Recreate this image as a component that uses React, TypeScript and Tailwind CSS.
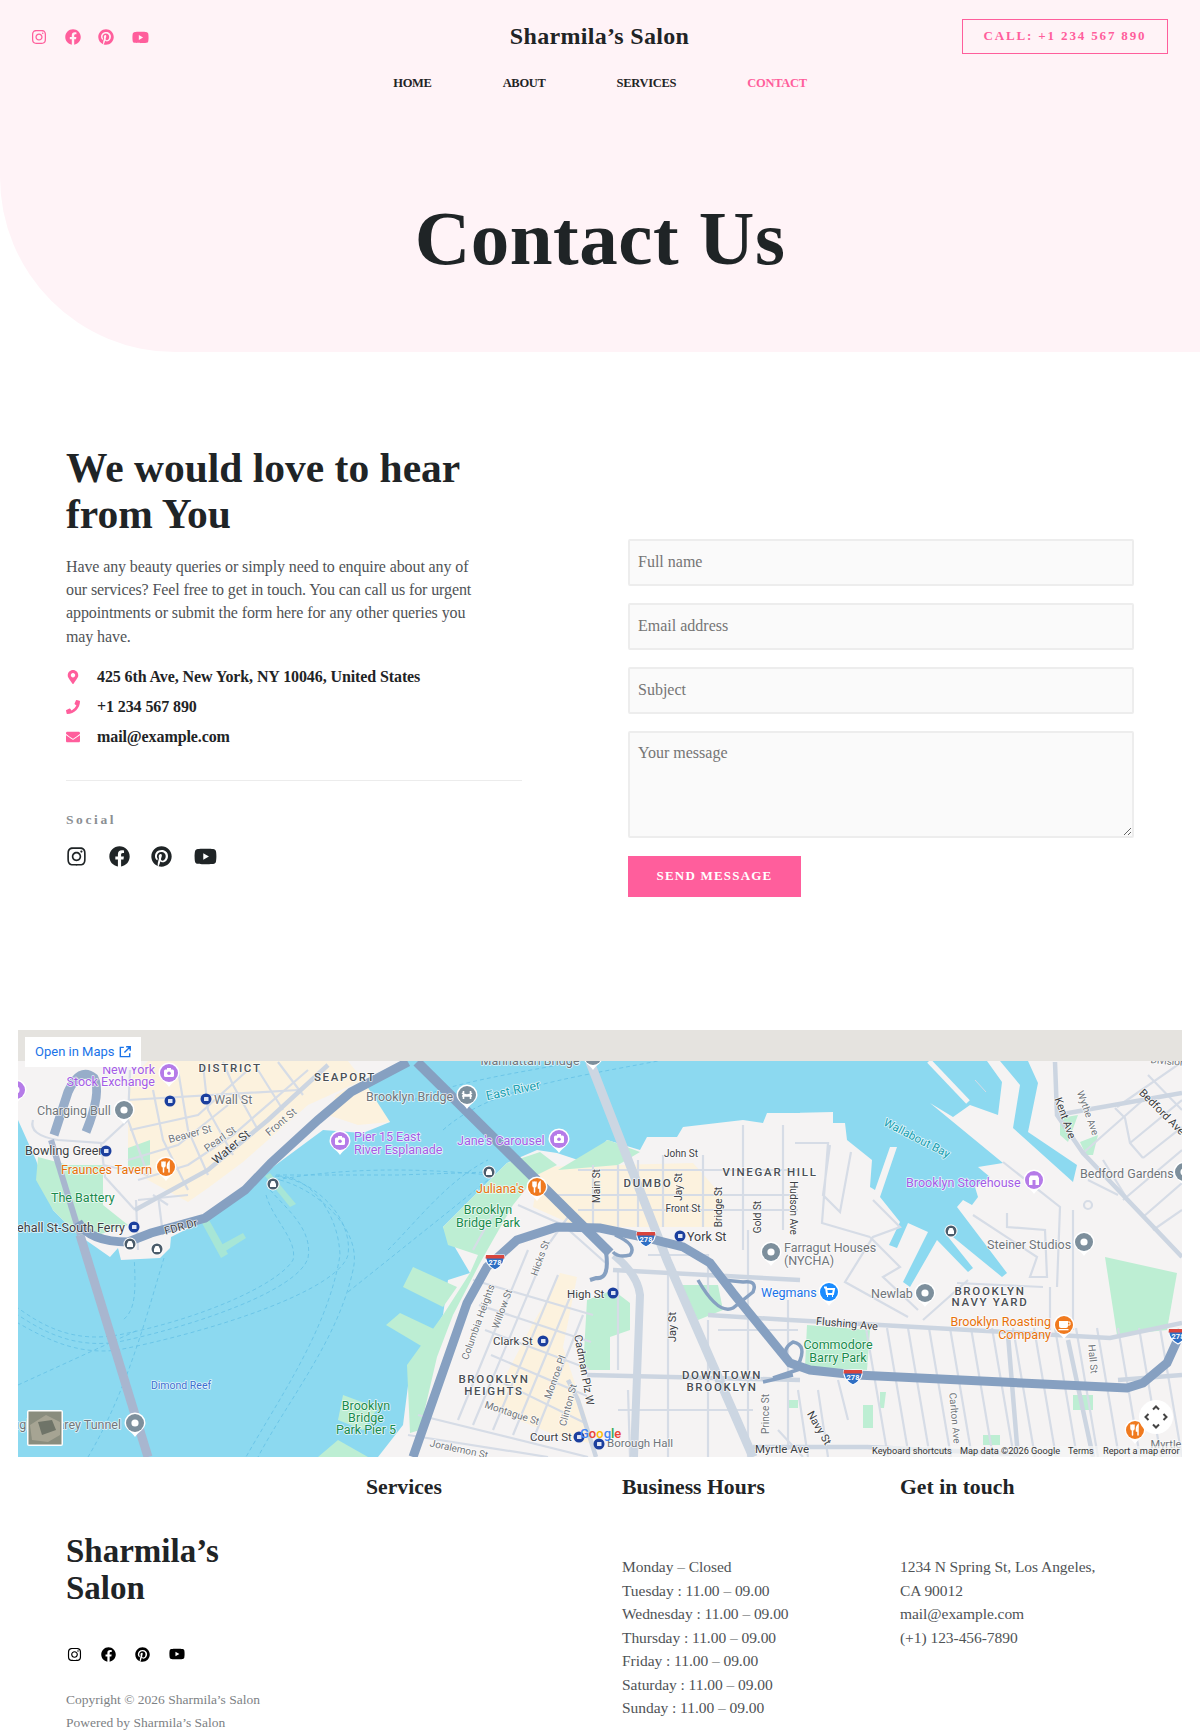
import type { ReactNode } from 'react';
import { FaEnvelope, FaFacebook, FaInstagram, FaMapMarkerAlt, FaPhoneAlt, FaPinterest, FaYoutube } from 'react-icons/fa';

const WATER = '#8cd9f0';
const LAND = '#f5f3f3';
const PARK = '#bdeed3';
const CREAM = '#fcf2de';
const ROAD = '#d6dce6';
const HIGHWAY = '#86a0c1';

type Label = [string, number, number, string, number?, string?, number?];

const GREY = '#70757a';
const DARK = '#3c4043';
const PURPLE = '#a45ce6';
const ORANGE = '#e8710a';
const GREEN = '#188a4c';
const BLUE = '#1a73e8';
const TEAL = '#129eaf';

// text, x, y, colour, rotation, anchor, size
const labels: Label[] = [
  ['New York', 137, 39, PURPLE, 0, 'end'],
  ['Stock Exchange', 137, 51, PURPLE, 0, 'end'],
  ['Wall St', 196, 69, GREY, 0, 'start'],
  ['Charging Bull', 19, 80, GREY, 0, 'start'],
  ['Beaver St', 172, 104, GREY, -15, 'middle', 10.5],
  ['Pearl St', 202, 109, GREY, -35, 'middle', 10.5],
  ['Water St', 213, 117, DARK, -40, 'middle', 12],
  ['Front St', 263, 92, GREY, -40, 'middle', 10.5],
  ['Bowling Green', 7, 120, DARK, 0, 'start'],
  ['Fraunces Tavern', 43, 139, ORANGE, 0, 'start'],
  ['The Battery', 33, 167, GREEN, 0, 'start'],
  ['Whitehall St-South Ferry', 107, 197, DARK, 0, 'end'],
  ['FDR Dr', 163, 197, DARK, -15, 'middle', 11],
  ['Pier 15 East', 336, 106, PURPLE, 0, 'start'],
  ['River Esplanade', 336, 119, PURPLE, 0, 'start'],
  ['Brooklyn Bridge', 348, 66, GREY, 0, 'start'],
  ['East River', 495, 60, TEAL, -12, 'middle'],
  ["Jane's Carousel", 439, 110, PURPLE, 0, 'start'],
  ["Juliana's", 458, 158, ORANGE, 0, 'start'],
  ['Brooklyn', 470, 179, GREEN, 0, 'middle'],
  ['Bridge Park', 470, 192, GREEN, 0, 'middle'],
  ['Main St', 578, 156, DARK, -90, 'middle', 10],
  ['Jay St', 660, 157, DARK, -90, 'middle', 10],
  ['Front St', 665, 178, DARK, 0, 'middle', 10],
  ['John St', 663, 123, DARK, 0, 'middle', 10],
  ['Bridge St', 700, 177, DARK, -90, 'middle', 10],
  ['Gold St', 739, 187, DARK, -90, 'middle', 10],
  ['Hudson Ave', 775, 178, DARK, 90, 'middle', 10],
  ['York St', 669, 206, DARK, 0, 'start'],
  ['Farragut Houses', 766, 217, GREY, 0, 'start'],
  ['(NYCHA)', 766, 230, GREY, 0, 'start'],
  ['Wegmans', 743, 262, BLUE, 0, 'start'],
  ['Newlab', 853, 263, GREY, 0, 'start'],
  ['Steiner Studios', 969, 214, GREY, 0, 'start'],
  ['Brooklyn Storehouse', 888, 152, PURPLE, 0, 'start'],
  ['Wallabout Bay', 899, 108, TEAL, 27, 'middle', 11.5],
  ['Bedford Gardens', 1062, 143, GREY, 0, 'start'],
  ['Kent Ave', 1047, 88, DARK, 70, 'middle', 11],
  ['Wythe Ave', 1070, 83, GREY, 70, 'middle', 10],
  ['Bedford Ave', 1144, 82, DARK, 45, 'middle', 11],
  ['Division', 1150, 31, GREY, 5, 'middle', 10],
  ['Brooklyn Roasting', 1033, 291, ORANGE, 0, 'end'],
  ['Company', 1033, 304, ORANGE, 0, 'end'],
  ['Flushing Ave', 829, 294, DARK, 5, 'middle', 11],
  ['Commodore', 820, 314, GREEN, 0, 'middle'],
  ['Barry Park', 820, 327, GREEN, 0, 'middle'],
  ['Hall St', 1075, 329, GREY, 85, 'middle', 10],
  ['Carlton Ave', 937, 388, GREY, 85, 'middle', 10],
  ['Navy St', 801, 398, DARK, 60, 'middle', 11],
  ['Myrtle Ave', 737, 419, DARK, 0, 'start', 11.5],
  ['Prince St', 747, 384, GREY, -90, 'middle', 10],
  ['Jay St', 654, 297, DARK, -90, 'middle', 11],
  ['High St', 549, 264, DARK, 0, 'start', 11.5],
  ['Clark St', 475, 311, DARK, 0, 'start', 11.5],
  ['Columbia Heights', 460, 292, GREY, -70, 'middle', 10],
  ['Willow St', 484, 279, GREY, -70, 'middle', 10],
  ['Hicks St', 522, 228, GREY, -70, 'middle', 10],
  ['Monroe Pl', 537, 347, GREY, -70, 'middle', 10],
  ['Clinton St', 550, 375, GREY, -75, 'middle', 10],
  ['Cadman Plz W', 566, 340, DARK, 80, 'middle', 11],
  ['Montague St', 494, 383, GREY, 18, 'middle', 10],
  ['Joralemon St', 441, 419, GREY, 12, 'middle', 10],
  ['Court St', 512, 407, DARK, 0, 'start', 11.5],
  ['Borough Hall', 589, 413, GREY, 0, 'start', 11.5],
  ['Dimond Reef', 163, 355, '#3c6fd0', 0, 'middle', 10.5],
  ['Brooklyn', 348, 375, GREEN, 0, 'middle'],
  ['Bridge', 348, 387, GREEN, 0, 'middle'],
  ['Park Pier 5', 348, 399, GREEN, 0, 'middle'],
  ['Hugh L. Carey Tunnel', 103, 394, GREY, 0, 'end'],
  ['Manhattan Bridge', 512, 30, GREY, 0, 'middle'],
  ['Myrtle', 1148, 414, GREY, 0, 'middle', 11],
];

const districts: [string, number, number][] = [
  ['DISTRICT', 212, 38],
  ['SEAPORT', 327, 47],
  ['DUMBO', 630, 153],
  ['VINEGAR HILL', 752, 142],
  ['BROOKLYN', 476, 349],
  ['HEIGHTS', 476, 361],
  ['DOWNTOWN', 704, 345],
  ['BROOKLYN', 704, 357],
  ['BROOKLYN', 972, 261],
  ['NAVY YARD', 972, 272],
];

const pins: [number, number, string, string][] = [
  [151, 43, '#b57be8', 'cam'],
  [106, 80, '#7d8f9c', 'dot'],
  [148, 137, '#f07a1f', 'fork'],
  [322, 111, '#b57be8', 'cam'],
  [449, 65, '#7d8f9c', 'bridge'],
  [541, 109, '#b57be8', 'cam'],
  [519, 157, '#f07a1f', 'fork'],
  [753, 222, '#7d8f9c', 'dot'],
  [811, 262, '#1a8cff', 'cart'],
  [907, 263, '#7d8f9c', 'dot'],
  [1066, 212, '#7d8f9c', 'dot'],
  [1016, 150, '#b57be8', 'store'],
  [1046, 295, '#f07a1f', 'cup'],
  [117, 393, '#7d8f9c', 'dot'],
  [1117, 400, '#f07a1f', 'fork'],
  [1166, 142, '#7d8f9c', 'dot'],
  [575, 26, '#7d8f9c', 'dot'],
  [-2, 60, '#b57be8', 'dot'],
];

const subways: [number, number][] = [
  [188, 69], [152, 71], [88, 121], [116, 197], [662, 206], [595, 263], [525, 311], [561, 407], [581, 414],
];
const ferries: [number, number][] = [[112, 214], [139, 219], [255, 154], [471, 142], [933, 201]];
const shields: [number, number][] = [[477, 232], [628, 209], [835, 347], [1160, 306]];

function Pin({ x, y, color, kind }: { x: number; y: number; color: string; kind: string }) {
  return (
    <g transform={`translate(${x} ${y})`}>
      <path d="M-10.5,0 A10.5,10.5 0 1 1 10.5,0 C10.5,6 3,9 0,14 C-3,9 -10.5,6 -10.5,0 Z" fill="#fff" />
      <circle r="9" fill={color} />
      {kind === 'dot' && <circle r="3.6" fill="#fff" />}
      {kind === 'cam' && (
        <g fill="#fff">
          <rect x="-5" y="-3.5" width="10" height="7.5" rx="1.5" />
          <rect x="-2" y="-5" width="4" height="2" />
          <circle r="1.8" cy="0.3" fill={color} />
        </g>
      )}
      {kind === 'fork' && (
        <g fill="none" stroke="#fff" strokeWidth="1.5" strokeLinecap="round">
          <path d="M-4,-5 V-1.5 Q-4,0 -2.5,0 Q-1,0 -1,-1.5 V-5 M-2.5,-5 V5" />
          <path d="M3,5 V-5 Q1,-3 1.5,1 H3" />
        </g>
      )}
      {kind === 'cart' && (
        <path d="M-5,-4.5 H-3 L-2,2 H4 L5,-3 H-2.5 M-2,4 h1 M3,4 h1" fill="none" stroke="#fff" strokeWidth="2" />
      )}
      {kind === 'store' && (
        <g fill="#fff">
          <path d="M-5,-2 L-3.5,-4.5 H3.5 L5,-2 V5 H-5 Z" />
          <rect x="-1.5" y="0" width="3" height="5" fill={color} />
        </g>
      )}
      {kind === 'cup' && (
        <g fill="#fff">
          <path d="M-5,-4 H4 V1 Q4,3 2,3 H-3 Q-5,3 -5,1 Z" />
          <rect x="-5.5" y="4" width="10" height="1.3" />
          <path d="M4,-3 H6 V0 H4" fill="none" stroke="#fff" strokeWidth="1" />
        </g>
      )}
      {kind === 'bridge' && (
        <path d="M-5,1 H5 M-3.5,-4 V4 M3.5,-4 V4 M-5,-2 Q0,2 5,-2" fill="none" stroke="#fff" strokeWidth="1.6" />
      )}
    </g>
  );
}

function FullscreenGlyph() {
  return (
    <g fill="none" stroke="#444" strokeWidth="2">
      <path d="M-3,-7.5 L0,-10.5 L3,-7.5" />
      <path d="M-3,7.5 L0,10.5 L3,7.5" />
      <path d="M-7.5,-3 L-10.5,0 L-7.5,3" />
      <path d="M7.5,-3 L10.5,0 L7.5,3" />
    </g>
  );
}

function MapPicture() {
  const eastGrid = Array.from({ length: 15 }, (_, i) => 848 + i * 21);
  const heightsA = [0, 1, 2, 3, 4];
  return (
    <svg viewBox="0 0 1164 427" className="block h-[427px] w-[1164px] font-['Roboto',sans-serif]">
      <rect width="1164" height="427" fill={WATER} />

      {/* ferry routes */}
      <g fill="none" stroke="#68c3e6" strokeWidth="0.9" strokeDasharray="4 3">
        <path d="M257,146 C300,150 335,190 330,225 C320,260 200,300 100,320 C60,325 30,310 0,293" />
        <path d="M252,160 C270,180 295,200 290,228 C280,260 180,295 100,312 C60,318 30,305 0,285" />
        <path d="M248,165 C255,190 280,210 275,230 C260,255 180,290 100,305 C60,312 30,300 0,278" />
        <path d="M260,146 C290,146 320,180 322,225 C310,300 260,370 228,427" />
        <path d="M262,150 C300,160 345,200 335,240 C320,310 270,370 240,427" />
        <path d="M258,145 H380 L471,142" />
        <path d="M258,150 C340,135 420,140 471,145" />
        <path d="M330,262 L470,150" />
        <path d="M116,225 C118,260 118,280 105,290 M146,228 C130,280 110,360 70,427" />
        <path d="M0,355 L120,300" />
        <path d="M425,100 C470,60 540,50 640,31" />
        <path d="M395,70 C440,50 520,40 560,31" />
        <path d="M370,220 C400,190 430,150 470,130" />
      </g>

      {/* land */}
      <polygon
        fill={LAND}
        points="0,31 390,31 335,62 355,78 372,92 345,103 305,100 255,137 227,163 187,190 153,207 152,218 142,228 103,230 100,218 92,227 72,213 60,205 35,180 18,130 0,90"
      />
      <polygon
        fill={LAND}
        points="360,427 385,395 392,340 425,285 430,250 452,243 425,197 459,163 489,133 519,120 539,123 569,133 589,110 622,120 629,107 659,107 665,97 725,90 745,93 749,83 782,83 782,31 1164,31 1164,427"
      />
      <polygon
        fill={WATER}
        points="772,31 910,31 969,31 984,52 980,85 952,75 935,87 912,73 985,133 960,137 972,147 957,157 960,167 954,175 945,170 939,177 989,243 984,247 935,207 927,203 955,238 950,242 919,210 892,257 885,252 910,202 890,193 879,218 871,215 882,192 862,167 879,117 872,117 857,160 852,157 854,130 829,110 827,93 815,93 815,82 772,83"
      />
      <polygon fill={WATER} points="982,31 1010,31 1020,53 1010,102 1059,135 1055,152 995,98 1002,55" />
      <path d="M911,31 L950,72" stroke={LAND} strokeWidth="5" />
      <path d="M957,50 L968,62" stroke={ROAD} strokeWidth="1" />

      {/* parks and neighbourhood tint */}
      <polygon fill={CREAM} points="110,52 130,31 330,31 345,50 290,75 225,132 190,158 170,172 130,150 110,130" />
      <polygon fill={CREAM} points="318,65 345,50 372,92 340,95 310,85" />
      <polygon fill={CREAM} points="522,137 675,133 705,167 702,197 655,197 560,197 515,177" />
      <polygon fill={CREAM} points="542,243 559,247 545,317 569,390 572,413 542,407 469,377 475,370 515,293 535,260" />
      <polygon fill={PARK} points="20,127 50,135 85,135 85,175 110,195 80,205 60,205 35,180 18,150" />
      <polygon fill={PARK} points="110,118 132,110 132,135 110,140" />
      <polygon fill={PARK} points="425,197 459,163 489,133 522,122 539,135 519,145 495,175 475,210 462,233 435,285 419,327 402,400 392,403 389,335 425,285 452,243 460,225 430,215" />
      <polygon fill={PARK} points="395,237 439,257 425,277 385,257" />
      <polygon fill={PARK} points="382,283 418,300 405,317 368,295" />
      <polygon fill={PARK} points="325,365 360,378 345,400 320,390" />
      <polygon fill={PARK} points="320,410 350,427 300,427" />
      <polygon fill={PARK} points="569,270 595,260 612,273 612,300 592,307 592,340 565,340" />
      <polygon fill={PARK} points="540,140 590,110 622,122 600,135" />
      <polygon fill={PARK} points="660,255 700,255 705,280 680,290" />
      <polygon fill={PARK} points="1087,227 1159,243 1149,300 1099,305" />
      <polygon fill={PARK} points="789,295 852,300 849,340 787,337" />
      <polygon fill={PARK} points="1042,88 1060,85 1050,112 1042,105" />
      <polygon fill={PARK} points="1062,112 1080,105 1075,125 1068,125" />
      <polygon fill={PARK} points="862,362 868,362 866,378 862,378" />
      <polygon fill={PARK} points="845,375 855,375 855,398 845,398" />
      <polygon fill={PARK} points="1055,365 1075,365 1075,380 1055,380" />
      <polygon fill={PARK} points="965,405 982,405 982,415 965,415" />
      <polygon fill={PARK} points="770,370 780,370 780,378 770,378" />
      <polygon fill="#a7e6d6" points="184,193 191,190 210,224 203,228" />
      <polygon fill="#a7e6d6" points="203,215 225,203 228,208 206,222" />
      <polygon fill="#a7e6d6" points="247,146 252,143 278,174 272,177" />

      {/* streets */}
      <g fill="none" stroke={ROAD} strokeWidth="2.2">
        <path d="M83,113 L87,147 L117,180" />
        <path d="M120,150 L170,135 L215,105 L290,40" />
        <path d="M130,145 L110,90 L112,40 M150,175 L135,165 M170,160 L145,110 L135,60 M190,145 L170,100 L160,40 M215,125 L190,80 L185,35 M240,100 L215,55 L205,32 M265,80 L240,40 M285,65 L260,32" />
        <path d="M110,70 L280,60 M112,100 L180,85 L230,40 M110,130 L160,115 L210,75" />
        <path d="M85,135 L130,145 M15,90 Q10,105 40,110 L85,113 L110,90" />
        <path d="M120,170 L170,165 M145,205 L140,165 M120,220 L118,170" />
        <path d="M440,390 L510,220 M455,395 L525,228 M475,400 L540,245 M495,405 L555,260 M515,410 L565,285" />
        {heightsA.map((i) => (
          <path key={i} d={`M${455 + i * 6},${250 + i * 25} L${575 - i * 2},${285 + i * 27}`} />
        ))}
        <path d="M400,385 L570,427 M390,405 L530,427 M555,180 L530,215" />
        <path d="M500,175 L545,195 L590,235 M480,175 L455,220" />
        <path d="M560,140 H780 M540,165 H780 M560,180 H780 M575,135 V197 M600,135 V197 M645,125 V197 M685,125 V197 M725,95 V220 M765,95 V200 M620,130 V197" />
        <path d="M777,113 H810 L804,193 L852,207 M812,115 L805,165 L822,182 L833,122" />
        <path d="M855,170 L882,197 L855,207 L827,252 L890,287 M852,207 L882,237 L865,247 L900,280" />
        <path d="M985,132 L1042,177 L1039,257 M955,185 L1019,227 L1012,247 L1029,247 L1027,200 L989,197 L989,183" />
        <path d="M1055,180 V300 M1032,257 V300 M939,253 L1025,257 M905,290 L950,250" />
        <path d="M600,240 V340 M630,225 H690 V265 M650,240 V427 M690,290 V427 M730,200 V427 M700,300 H780 M770,270 V420" />
        <path d="M600,380 H735 M610,360 L612,427 M760,400 L785,427 M780,360 L790,427 M800,360 L810,427 M820,350 L830,390" />
        <path d="M1099,77 L1164,32 M1112,113 L1164,70 M1065,123 L1125,70 M1125,128 L1164,97 M1105,170 L1164,120 M1125,187 L1164,153 M1135,200 L1164,180" />
        <path d="M1097,78 L1107,88 L1112,113 L1125,128 M1130,45 L1164,80 M1070,150 L1100,165 M1085,130 L1110,170" />
        <circle cx="1070" cy="175" r="4" />
      </g>
      <g fill="none" stroke={ROAD} strokeWidth="2.2">
        {eastGrid.map((x) => (
          <path key={x} d={`M${x},298 L${x + 22},427`} />
        ))}
      </g>
      <g fill="none" stroke="#ccd5e1" strokeWidth="4.5">
        <path d="M117,180 L190,140 L250,90 L310,35" />
        <path d="M772,290 L862,295 L1092,308 L1164,293" />
        <path d="M690,285 L772,290" />
        <path d="M569,345 L782,350" />
        <path d="M595,240 L782,250" />
        <path d="M735,417 H849 L1000,424" />
        <path d="M1037,32 L1039,85 L1065,123 L1164,227" />
        <path d="M1039,85 L1164,63" />
        <path d="M1100,350 L1164,345" />
        <path d="M550,350 L560,370 L578,427" />
        <path d="M990,305 L1000,427 M1050,310 L1075,427" />
      </g>

      {/* bridges and highways */}
      <path d="M33,110 L62,205" fill="none" stroke="#a8b6cf" strokeWidth="6" />
      <path d="M62,205 L130,427" fill="none" stroke="#a8b6cf" strokeWidth="9" />
      <path d="M596,225 Q620,245 622,265 L616,427" fill="none" stroke="#ccd6e2" strokeWidth="8" />
      <path d="M572,32 L649,230 L735,427" fill="none" stroke="#ccd6e2" strokeWidth="9" />
      <g fill="none" stroke={HIGHWAY}>
        <path d="M36,105 L50,62 Q62,36 76,48 Q84,62 68,102" strokeWidth="9" strokeOpacity="0.85" />
        <path d="M60,192 Q72,212 110,212 L133,203 L187,188 L227,160 L253,133 L300,90 L333,62 L390,32" strokeWidth="9" />
        <path d="M399,32 L592,223" strokeWidth="10" />
        <path d="M395,427 L449,273 L469,237 L499,210 L539,197 L582,198 L625,207 L665,217 L692,233 L715,263 L772,333 L792,340 L839,345 L1109,358 L1125,353 L1149,333 L1164,300" strokeWidth="9" />
        <path d="M588,222 Q592,250 578,248 L572,250" strokeWidth="4" />
        <path d="M597,205 Q620,215 612,225 Q600,228 595,222" strokeWidth="3.5" />
        <path d="M680,250 Q700,285 715,278 L735,262 Q740,250 725,252 L705,250" strokeWidth="3.5" />
        <path d="M772,330 Q762,320 775,312 Q790,315 780,335" strokeWidth="3.5" />
        <path d="M745,352 L775,345 M755,348 L785,338" strokeWidth="3.5" />
      </g>

      {/* map labels */}
      <g fontSize="12.5" stroke="#ffffff" strokeWidth="1.6" paintOrder="stroke" strokeLinejoin="round" strokeOpacity="0.75">
        {labels.map(([text, x, y, fill, rot, anchor, size], i) => (
          <text
            key={i}
            x={x}
            y={y}
            fill={fill}
            fontSize={size}
            textAnchor={(anchor ?? 'start') as 'start' | 'middle' | 'end'}
            dominantBaseline="central"
            transform={rot ? `rotate(${rot} ${x} ${y})` : undefined}
          >
            {text}
          </text>
        ))}
        {districts.map(([text, x, y], i) => (
          <text key={i} x={x} y={y} fill="#4a4f55" fontSize="11.5" fontWeight="500" letterSpacing="1.7" textAnchor="middle" dominantBaseline="central">
            {text}
          </text>
        ))}
      </g>

      {/* markers */}
      {pins.map(([x, y, color, kind], i) => (
        <Pin key={i} x={x} y={y} color={color} kind={kind} />
      ))}
      {subways.map(([x, y], i) => (
        <g key={i} transform={`translate(${x} ${y})`}>
          <circle r="5.5" fill="#1b3f9e" />
          <rect x="-2" y="-2" width="4.5" height="4" rx="0.5" fill="#dfe6f5" />
        </g>
      ))}
      {ferries.map(([x, y], i) => (
        <g key={i} transform={`translate(${x} ${y})`}>
          <circle r="6.5" fill="#fff" />
          <circle r="5.5" fill="#4b5c6b" />
          <path d="M-3,3 H3 V0 L1.5,-3 H-1.5 L-3,0 Z" fill="#fff" />
        </g>
      ))}
      {shields.map(([x, y], i) => (
        <g key={i} transform={`translate(${x} ${y})`}>
          <path d="M-9,-7 H9 Q11,2 0,8 Q-11,2 -9,-7 Z" fill="#2f6fc4" stroke="#fff" strokeWidth="1.2" />
          <path d="M-9,-7 H9 L9.5,-3.5 H-9.5 Z" fill="#d9453d" />
          <text y="3" fill="#fff" fontSize="7.5" fontWeight="700" textAnchor="middle">
            278
          </text>
        </g>
      ))}

      {/* top band and controls */}
      <rect width="1164" height="31" fill="#e5e3df" />
      <rect x="9" y="380" width="36" height="36" rx="2" fill="#fff" />
      <rect x="10.5" y="381.5" width="33" height="33" fill="#8a8d7e" />
      <path d="M12,395 L28,385 L42,392 L42,405 L30,412 L14,410 Z" fill="#a6a493" />
      <path d="M20,392 L34,390 L38,400 L24,405 Z" fill="#6f7468" />
      <rect x="854" y="416" width="310" height="11" fill="#f5f5f5" fillOpacity="0.7" />
      <g fontSize="9.2" fill="#333">
        <text x="854" y="424">Keyboard shortcuts</text>
        <text x="942" y="424">Map data ©2026 Google</text>
        <text x="1050" y="424">Terms</text>
        <text x="1085" y="424">Report a map error</text>
      </g>
      <text x="562" y="408" fontSize="13" fontWeight="500">
        <tspan fill="#4285f4">G</tspan>
        <tspan fill="#ea4335">o</tspan>
        <tspan fill="#fbbc05">o</tspan>
        <tspan fill="#4285f4">g</tspan>
        <tspan fill="#34a853">l</tspan>
        <tspan fill="#ea4335">e</tspan>
      </text>
      <g transform="translate(1138 387)">
        <circle r="17" fill="#fff" />
        <FullscreenGlyph />
      </g>
    </svg>
  );
}

function SocialIcons({ className, gap, youtube }: { className: string; gap: string; youtube: string }) {
  return (
    <div className={`flex items-center ${gap} ${className}`}>
      <FaInstagram />
      <FaFacebook />
      <FaPinterest />
      <FaYoutube className={youtube} />
    </div>
  );
}

function ContactRow({ icon, children }: { icon: ReactNode; children: ReactNode }) {
  return (
    <div className="flex h-[30px] items-center">
      <span className="w-[31px] text-[14px] text-[#ff5e9c]">{icon}</span>
      <span className="text-[16px] font-bold tracking-[-0.1px] text-[#1f2426]">{children}</span>
    </div>
  );
}

const inputClass =
  'w-full rounded-[2px] border-2 border-[#ededed] bg-[#fafafa] px-[8px] text-[16px] text-[#333] outline-none placeholder:text-[#757575]';

const hours = [
  'Monday – Closed',
  'Tuesday : 11.00 – 09.00',
  'Wednesday : 11.00 – 09.00',
  'Thursday : 11.00 – 09.00',
  'Friday : 11.00 – 09.00',
  'Saturday : 11.00 – 09.00',
  'Sunday : 11.00 – 09.00',
];

export default function App() {
  return (
    <div className="w-[1200px] bg-white font-['Liberation_Serif',serif] text-[#555]">
      <header className="h-[352px] rounded-bl-[175px] bg-[#fff3f7] pt-[18px]">
        <div className="grid h-[35px] grid-cols-[1fr_auto_1fr] items-center pl-[31px] pr-[32px]">
          <SocialIcons className="mt-[2px] text-[16px] text-[#ff5e9c]" gap="gap-[17.5px]" youtube="text-[17px]" />
          <div className="text-[24px] font-bold tracking-[0.3px] text-[#1f2426]">Sharmila’s Salon</div>
          <div className="flex justify-end">
            <a className="flex h-[35px] w-[206px] items-center justify-center border border-[#ff5e9c] text-[13px] font-bold tracking-[1.85px] text-[#ff5e9c]">
              CALL: +1 234 567 890
            </a>
          </div>
        </div>
        <nav className="mt-[20px] flex h-[20px] items-center justify-center gap-[71px] text-[12.5px] font-bold tracking-[-0.3px] text-[#1f2426]">
          <a>HOME</a>
          <a>ABOUT</a>
          <a>SERVICES</a>
          <a className="text-[#ff5e9c]">CONTACT</a>
        </nav>
        <h1 className="mt-[105px] text-center text-[77px] leading-[80px] font-bold tracking-[0.5px] text-[#1f2426]">Contact Us</h1>
      </header>

      <main className="grid grid-cols-[456px_506px] gap-x-[106px] pt-[93px] pb-[133.5px] pl-[66px]">
        <section>
          <h2 className="mb-[17.5px] text-[41.5px] leading-[46px] font-bold text-[#1f2426]">
            We would love to hear
            <br />
            from You
          </h2>
          <p className="w-[420px] text-[16px] leading-[23.4px] tracking-[-0.11px] text-[#4f5356]">
            Have any beauty queries or simply need to enquire about any of our services? Feel free to get in touch. You can call us for urgent appointments or submit the form here for any other queries you may have.
          </p>
          <div className="mt-[14px]">
            <ContactRow icon={<FaMapMarkerAlt />}>425 6th Ave, New York, NY 10046, United States</ContactRow>
            <ContactRow icon={<FaPhoneAlt className="-scale-x-100" />}>+1 234 567 890</ContactRow>
            <ContactRow icon={<FaEnvelope />}>mail@example.com</ContactRow>
          </div>
          <div className="mt-[28px] h-px bg-[#ececec]" />
          <div className="mt-[29px] text-[13.5px] leading-[20px] font-bold tracking-[2.6px] text-[#8b8f93]">Social</div>
          <SocialIcons className="mt-[15px] h-[22px] text-[21px] text-[#1f2426]" gap="gap-[21.5px]" youtube="text-[23px]" />
        </section>

        <form className="flex flex-col gap-[17.5px] pt-[94px]">
          <input className={`${inputClass} h-[46.5px]`} placeholder="Full name" />
          <input className={`${inputClass} h-[46.5px]`} placeholder="Email address" />
          <input className={`${inputClass} h-[46.5px]`} placeholder="Subject" />
          <textarea className={`${inputClass} h-[107px] py-[8px]`} placeholder="Your message" />
          <button
            type="button"
            className="h-[41px] w-[173px] bg-[#ff5e9c] text-[13px] font-bold tracking-[1.2px] text-white"
          >
            SEND MESSAGE
          </button>
        </form>
      </main>

      <div className="relative mx-[18px] h-[427px]">
        <MapPicture />
        <a className="absolute top-[7px] left-[7px] flex h-[30px] w-[116px] items-center bg-white pl-[10px] font-['Roboto',sans-serif] text-[13px] text-[#1a73e8]">
          Open in Maps
          <svg viewBox="0 0 24 24" className="ml-[3px] h-[14px] w-[14px]" fill="none" stroke="#1a73e8" strokeWidth="2.4">
            <path d="M10,4 H4 V20 H20 V14 M14,3 H21 V10 M21,3 L11,13" />
          </svg>
        </a>
      </div>

      <footer className="grid grid-cols-[300px_256px_278px_1fr] pt-[17px] pl-[66px]">
        <div className="pt-[59px]">
          <div className="text-[33px] leading-[37px] font-bold text-[#1f2426]">
            Sharmila’s
            <br />
            Salon
          </div>
          <SocialIcons className="mt-[39px] h-[16px] pl-[1px] text-[15px] text-black" gap="gap-[19px]" youtube="text-[16px]" />
          <div className="mt-[26px] text-[13.5px] leading-[23px] text-[#7d8184]">
            <div>Copyright © 2026 Sharmila’s Salon</div>
            <div>Powered by Sharmila’s Salon</div>
          </div>
        </div>
        <div>
          <h3 className="text-[21.7px] leading-[26px] font-bold text-[#1f2426]">Services</h3>
        </div>
        <div>
          <h3 className="text-[21.7px] leading-[26px] font-bold text-[#1f2426]">Business Hours</h3>
          <ul className="mt-[55px] text-[15.5px] leading-[23.5px] tracking-[-0.05px] text-[#4f5356]">
            {hours.map((h) => (
              <li key={h}>{h}</li>
            ))}
          </ul>
        </div>
        <div>
          <h3 className="text-[21.7px] leading-[26px] font-bold text-[#1f2426]">Get in touch</h3>
          <div className="mt-[55px] text-[15.5px] leading-[23.5px] tracking-[-0.05px] text-[#4f5356]">
            <div>1234 N Spring St, Los Angeles,</div>
            <div>CA 90012</div>
            <div>mail@example.com</div>
            <div>(+1) 123-456-7890</div>
          </div>
        </div>
      </footer>
    </div>
  );
}
